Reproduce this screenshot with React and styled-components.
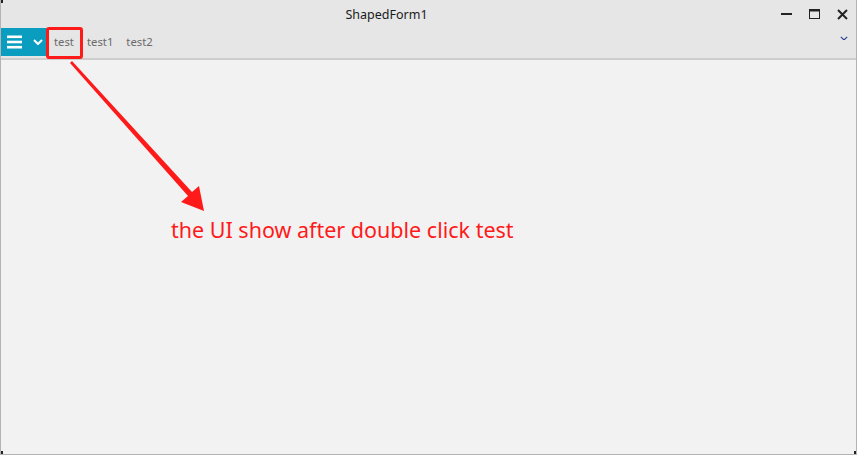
import React from "react";
import styled, { createGlobalStyle } from "styled-components";

const Global = createGlobalStyle`
  html, body { margin: 0; padding: 0; }
  body { font-family: "Noto Sans", "Open Sans", sans-serif; background: #f2f2f2; }
`;

const Window = styled.div`
  position: relative;
  width: 857px;
  height: 455px;
  box-sizing: border-box;
  border-left: 1px solid #b4b4b4;
  border-right: 1px solid #b4b4b4;
  border-bottom: 1px solid #b4b4b4;
  background: #f2f2f2;
  display: flex;
  flex-direction: column;
  overflow: hidden;
`;

const Corner = styled.span`
  position: absolute;
  width: 3px;
  height: 3px;
  background: #222;
  ${(p) => (p.$top ? "top: 0;" : "bottom: 0;")}
  ${(p) => (p.$left ? "left: -1px;" : "right: -1px;")}
`;

const TitleBar = styled.div`
  height: 28px;
  background: #e6e6e6;
  display: flex;
  align-items: center;
`;

const Title = styled.div`
  flex: 1;
  text-align: center;
  font-size: 12.5px;
  color: #1a1a1a;
`;

const Controls = styled.div`
  display: flex;
  align-items: center;
`;

const Ctrl = styled.button`
  width: 28px;
  height: 20px;
  border: none;
  background: none;
  padding: 0;
  display: flex;
  align-items: center;
  justify-content: center;
  color: #222;
`;

const ToolBar = styled.div`
  height: 30px;
  background: #e6e6e6;
  border-bottom: 2px solid #cdcdcd;
  display: flex;
  align-items: flex-start;
`;

const MenuButton = styled.div`
  width: 47px;
  height: 28px;
  background: #0a9dbf;
  display: flex;
  align-items: center;
  padding-left: 6px;
  gap: 11px;
  box-sizing: border-box;
`;

const Tabs = styled.div`
  display: flex;
  align-items: center;
  height: 28px;
  padding-left: 6px;
  gap: 13px;
  flex: 1;
`;

const Tab = styled.span`
  font-size: 11.3px;
  color: #6b6b6b;
  line-height: 28px;
`;

const MoreChevron = styled.div`
  height: 20px;
  width: 22px;
  display: flex;
  align-items: center;
  justify-content: center;
  margin-right: 1px;
`;

const Content = styled.div`
  flex: 1;
  background: #f2f2f2;
`;

const Highlight = styled.div`
  position: absolute;
  left: 45px;
  top: 27px;
  width: 37px;
  height: 32px;
  box-sizing: border-box;
  border: 3px solid #ff1a1a;
  border-radius: 3px;
`;

const Overlay = styled.svg`
  position: absolute;
  left: 0;
  top: 0;
  pointer-events: none;
`;

const Note = styled.div`
  position: absolute;
  left: 170px;
  top: 215px;
  font-size: 21.5px;
  color: #ff1a1a;
  white-space: nowrap;
`;

const Hamburger = () => (
  <svg width="15" height="14" viewBox="0 0 15 14">
    <rect x="0" y="0.5" width="15" height="2.6" fill="#fff" />
    <rect x="0" y="5.7" width="15" height="2.6" fill="#fff" />
    <rect x="0" y="10.9" width="15" height="2.6" fill="#fff" />
  </svg>
);

const Chevron = ({ color = "#fff", w = 10, sw = 2 }) => (
  <svg width={w} height={w * 0.6} viewBox="0 0 10 6">
    <polyline points="1,1 5,5 9,1" fill="none" stroke={color} strokeWidth={sw} />
  </svg>
);

export default function App() {
  return (
    <>
      <Global />
      <Window>
        <Corner $top $left />
        <Corner $left />
        <Corner />
        <TitleBar>
          <Title>ShapedForm1</Title>
          <Controls>
            <Ctrl>
              <svg width="11" height="10" viewBox="0 0 11 10">
                <rect x="0" y="4" width="11" height="2" fill="#222" />
              </svg>
            </Ctrl>
            <Ctrl>
              <svg width="11" height="10" viewBox="0 0 11 10">
                <rect x="0.5" y="0.5" width="10" height="9" fill="none" stroke="#222" />
                <rect x="0" y="0" width="11" height="2.5" fill="#222" />
              </svg>
            </Ctrl>
            <Ctrl>
              <svg width="11" height="11" viewBox="0 0 11 11">
                <path d="M1 1 L10 10 M10 1 L1 10" stroke="#222" strokeWidth="2" />
              </svg>
            </Ctrl>
          </Controls>
        </TitleBar>
        <ToolBar>
          <MenuButton>
            <Hamburger />
            <Chevron />
          </MenuButton>
          <Tabs>
            <Tab>test</Tab>
            <Tab>test1</Tab>
            <Tab>test2</Tab>
          </Tabs>
          <MoreChevron>
            <Chevron color="#2a3f8f" w={8} sw={1.4} />
          </MoreChevron>
        </ToolBar>
        <Content />
        <Highlight />
        <Overlay width="857" height="455" viewBox="0 0 857 455">
          <polygon points="69,63 71,61 191,192 198,186 203,211 180,202 187,196" fill="#ff1a1a" />
        </Overlay>
        <Note>the UI show after double click test</Note>
      </Window>
    </>
  );
}
